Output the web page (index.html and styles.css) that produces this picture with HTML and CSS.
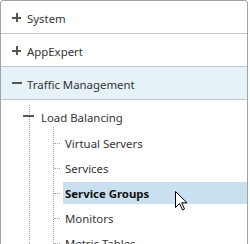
FILE: index.html
```html
<!DOCTYPE html>
<html lang="en">
<head>
    <meta charset="UTF-8">
    <title>Navigation</title>
    <link rel="stylesheet" href="styles.css">
</head>
<body>
    <div class="nav-panel">
        <div class="nav-row">
            <span class="icon-plus"></span>
            <span>System</span>
        </div>
        <div class="nav-row">
            <span class="icon-plus"></span>
            <span>AppExpert</span>
        </div>
        <div class="nav-row nav-row-open">
            <span class="icon-minus"></span>
            <span>Traffic Management</span>
        </div>

        <ul class="tree">
            <li>
                <div class="tree-node">
                    <span class="icon-minus node-toggle"></span>
                    <span>Load Balancing</span>
                </div>
                <ul class="tree-leaves">
                    <li class="leaf"><span class="stub"></span><span class="leaf-label">Virtual Servers</span></li>
                    <li class="leaf"><span class="stub"></span><span class="leaf-label">Services</span></li>
                    <li class="leaf"><span class="stub"></span><span class="leaf-label active">Service Groups</span></li>
                    <li class="leaf"><span class="stub"></span><span class="leaf-label">Monitors</span></li>
                    <li class="leaf"><span class="stub"></span><span class="leaf-label">Metric Tables</span></li>
                </ul>
            </li>
        </ul>

        <svg class="cursor" width="14" height="21" viewBox="0 0 14 21">
            <path d="M0.5 0.5 L0.5 16.5 L4.5 12.5 L7.5 19 L9.5 18 L6.8 11.8 L12 11.8 Z" fill="#fff" stroke="#000" stroke-width="1" stroke-linejoin="miter"/>
        </svg>
    </div>
</body>
</html>
```

FILE: styles.css
```css
body {
    margin: 0;
    font-family: "Noto Sans", "Open Sans", sans-serif;
    font-size: 11.4px;
    color: #333;
    background: #fff;
}

.nav-panel {
    position: relative;
    width: 246px;
    height: 260px;
    border: 1px solid #9ca5ab;
    border-radius: 3px 3px 0 0;
    overflow: hidden;
}

.nav-row {
    display: flex;
    align-items: center;
    gap: 6px;
    height: 32px;
    padding-left: 11px;
    border-bottom: 1px solid #c3c8cb;
}

.nav-row span:last-child {
    padding-top: 2px;
}

.nav-row-open {
    background: #e6f1f8;
}

.icon-plus {
    position: relative;
    width: 9px;
    height: 9px;
}

.icon-plus::before,
.icon-plus::after {
    content: "";
    position: absolute;
    background: #555;
}

.icon-plus::before {
    left: 0;
    top: 4px;
    width: 9px;
    height: 2px;
}

.icon-plus::after {
    left: 4px;
    top: 0;
    width: 2px;
    height: 9px;
}

.icon-minus {
    width: 10px;
    height: 2px;
    background: #555;
    margin-right: -1px;
}

.tree {
    list-style: none;
    margin: 0 0 0 28px;
    padding: 0;
    border-left: 1px dotted #aaa;
}

.tree-node {
    display: flex;
    align-items: center;
    height: 22px;
    margin-top: 5px;
}

.tree-node span:last-child {
    padding-top: 2px;
}

.node-toggle {
    width: 11px;
    margin-left: -7px;
    margin-right: 7px;
}

.tree-leaves {
    list-style: none;
    margin: 0 0 0 23px;
    padding: 5px 0 0;
    border-left: 1px dotted #aaa;
}

.leaf {
    display: flex;
    align-items: center;
    height: 22px;
    margin-bottom: 3px;
}

.stub {
    width: 6px;
    border-top: 1px dotted #aaa;
    margin-right: 3px;
}

.leaf-label {
    flex: 1;
    height: 22px;
    line-height: 24px;
    padding-left: 2px;
}

.leaf-label.active {
    background: #c8e0f0;
    font-weight: bold;
    color: #111;
}

.cursor {
    position: absolute;
    left: 174px;
    top: 190px;
}
```
